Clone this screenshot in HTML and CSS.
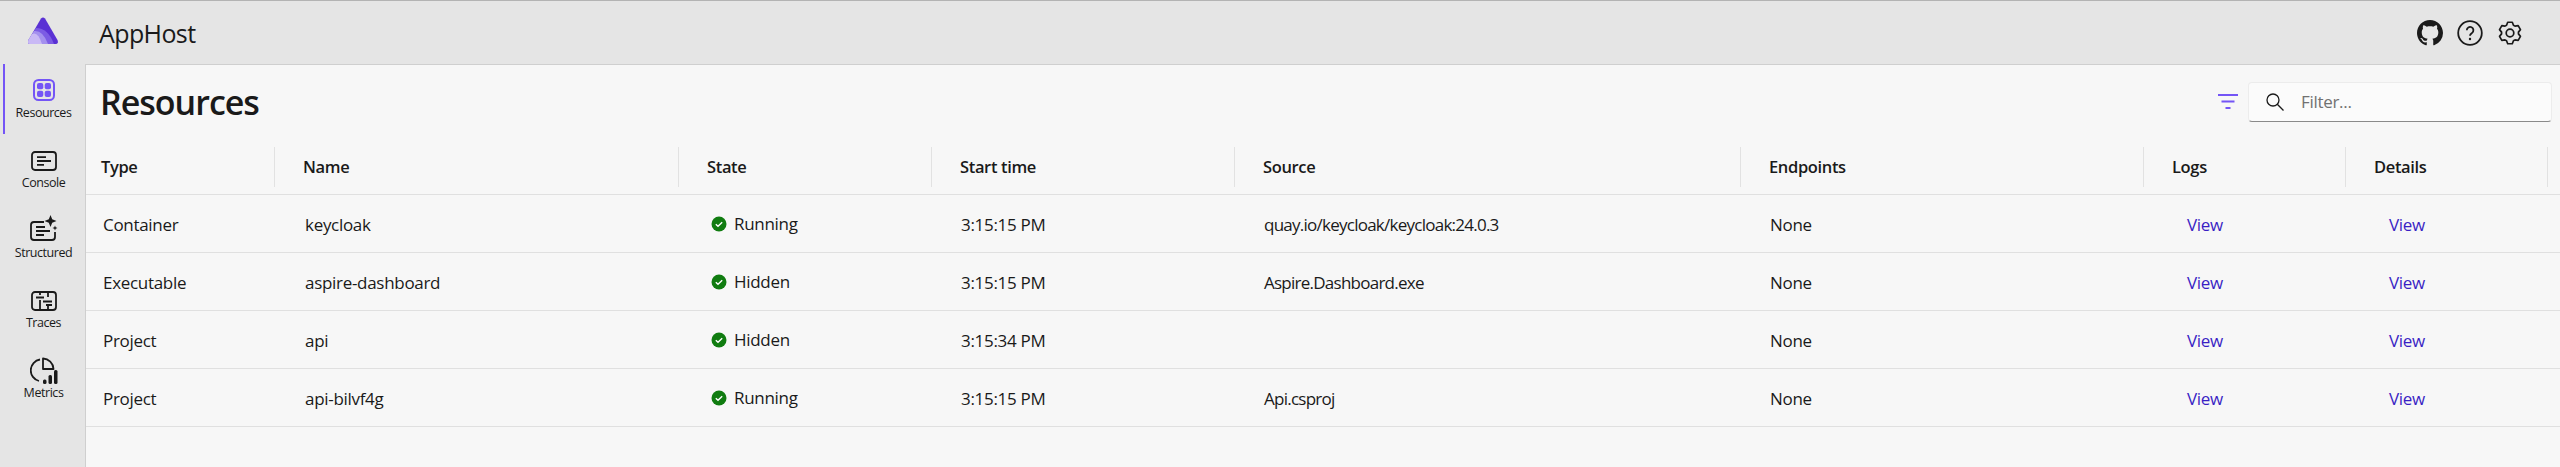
FILE: index.html
```html
<!DOCTYPE html>
<html lang="en">
<head>
<meta charset="utf-8">
<title>Resources</title>
<link rel="stylesheet" href="styles.css">
</head>
<body>
<div class="app">
  <header class="topbar">
    <div class="logo-cell">
      <svg viewBox="0 0 30 27" width="30" height="27">
        <path d="M13 1.500Q15 -.5 17 1.500L29.500 23Q31 27 27 27L3 27Q-1 27 .5 23Z" fill="#5a31d4"/>
        <path d="M3 27Q-1 27 .5 23L8 11Q20 11 26 27Z" fill="#7c5ce4"/>
        <path d="M3 27Q-1 27 .5 23L6 14Q15 13 20 27Z" fill="#a490ee"/>
        <path d="M3 27Q-1 27 .5 23L4 17Q10 14 14 27Z" fill="#c9b9f5"/>
      </svg>
    </div>
    <div class="app-title">AppHost</div>
    <div class="top-icons">
      <svg viewBox="0 0 16 16" width="26" height="26"><path fill="#1a1a1a" d="M8 0C3.580 0 0 3.580 0 8c0 3.540 2.290 6.530 5.470 7.590.4.070.55-.17.55-.38 0-.19-.01-.82-.01-1.490-2.010.37-2.530-.49-2.690-.94-.09-.23-.48-.94-.82-1.130-.28-.15-.68-.52-.01-.53.63-.01 1.080.58 1.230.82.72 1.210 1.870.87 2.330.66.070-.52.28-.87.51-1.070-1.780-.2-3.640-.89-3.640-3.950 0-.87.31-1.590.82-2.150-.08-.2-.36-1.020.08-2.120 0 0 .67-.21 2.200.82.64-.18 1.320-.27 2-.27s1.360.09 2 .27c1.530-1.040 2.200-.82 2.200-.82.44 1.100.16 1.920.08 2.120.51.56.82 1.270.82 2.150 0 3.070-1.870 3.750-3.650 3.950.29.25.54.73.54 1.480 0 1.070-.01 1.930-.01 2.200 0 .21.150.46.55.38A8.010 8.010 0 0 0 16 8c0-4.420-3.580-8-8-8z"/></svg>
      <svg viewBox="0 0 26 26" width="26" height="26"><circle cx="13" cy="13" r="11.800" fill="none" stroke="#1a1a1a" stroke-width="1.800"/><path d="M9.800 10.300a3.300 3.300 0 1 1 5.300 2.600c-1.200.9-2.100 1.300-2.100 2.900" fill="none" stroke="#1a1a1a" stroke-width="1.800"/><circle cx="13" cy="19" r="1.200" fill="#1a1a1a"/></svg>
      <svg class="gear" viewBox="0 0 24 24" width="24" height="24"><path d="M15.460 4.230L14.290 1.240H9.710L8.540 4.230L7 5.120L3.830 4.640L1.540 8.600L3.550 11.110V12.890L1.540 15.400L3.830 19.360L7 18.880L8.540 19.770L9.710 22.760H14.290L15.460 19.770L17 18.880L20.170 19.360L22.460 15.400L20.450 12.890V11.110L22.460 8.600L20.170 4.640L17 5.120Z" fill="none" stroke="#1a1a1a" stroke-width="1.700" stroke-linejoin="round"/><circle cx="12" cy="12" r="3.800" fill="none" stroke="#1a1a1a" stroke-width="1.700"/></svg>
    </div>
  </header>
  <div class="body">
    <nav class="nav">
      <a class="nav-item active">
        <span class="nav-icon"><svg viewBox="0 0 22 22" width="22" height="22"><rect x="1" y="1" width="20" height="20" rx="4.500" fill="none" stroke="#7455f6" stroke-width="2"/><rect x="4" y="4" width="6.300" height="6.300" rx="2" fill="#7455f6"/><rect x="11.700" y="4" width="6.300" height="6.300" rx="2" fill="#7455f6"/><rect x="4" y="11.700" width="6.300" height="6.300" rx="2" fill="#7455f6"/><rect x="11.700" y="11.700" width="6.300" height="6.300" rx="2" fill="#7455f6"/></svg></span>
        <span>Resources</span>
      </a>
      <a class="nav-item">
        <span class="nav-icon"><svg viewBox="0 0 26 20" width="26" height="20"><rect x="1" y="1" width="24" height="18" rx="3" fill="none" stroke="#1a1a1a" stroke-width="1.800"/><path d="M6 6.200h9M6 10h14M6 13.800h7" stroke="#1a1a1a" stroke-width="1.800"/></svg></span>
        <span>Console</span>
      </a>
      <a class="nav-item">
        <span class="nav-icon"><svg viewBox="0 0 28 26" width="28" height="26"><path d="M14 7H4a3 3 0 0 0-3 3v12a3 3 0 0 0 3 3h18a3 3 0 0 0 3-3v-5" fill="none" stroke="#1a1a1a" stroke-width="1.800"/><path d="M6 12h9M6 16h14M6 20h8" stroke="#1a1a1a" stroke-width="1.800"/><path d="M20.500 0l1.700 4.300L26.500 6l-4.300 1.700L20.500 12l-1.700-4.300L14.500 6l4.300-1.700zM25 10.500l.7 1.800 1.800.7-1.800.7-.7 1.800-.7-1.800-1.800-.7 1.800-.7z" fill="#1a1a1a"/></svg></span>
        <span>Structured</span>
      </a>
      <a class="nav-item">
        <span class="nav-icon"><svg viewBox="0 0 26 20" width="26" height="20"><rect x="1" y="1" width="24" height="18" rx="3" fill="none" stroke="#1a1a1a" stroke-width="1.800"/><path d="M9 1v3M9 9v10M17 1v5M17 15v4M5 6.500h8M12 10.500h9M15 14h6" stroke="#1a1a1a" stroke-width="1.800" fill="none"/></svg></span>
        <span>Traces</span>
      </a>
      <a class="nav-item">
        <span class="nav-icon"><svg class="metrics" viewBox="0 0 28 27" width="28" height="27"><path d="M10 2.500A11 11 0 0 0 9 24" fill="none" stroke="#1a1a1a" stroke-width="1.800"/><path d="M13 1.500A11 11 0 0 1 23.500 12H13Z" fill="none" stroke="#1a1a1a" stroke-width="1.800" stroke-linejoin="round"/><rect x="13" y="22.500" width="3.500" height="4.500" rx="1.500" fill="#1a1a1a"/><rect x="18.500" y="18" width="3.500" height="9" rx="1.500" fill="#1a1a1a"/><rect x="24" y="13" width="3.500" height="14" rx="1.500" fill="#1a1a1a"/></svg></span>
        <span>Metrics</span>
      </a>
    </nav>
    <main class="main">
      <div class="title-row">
        <h1>Resources</h1>
        <div class="tools">
          <svg viewBox="0 0 20 15" width="20" height="15"><path d="M0 1h20M3.500 7.500h13M7.500 14h5" stroke="#7455f6" stroke-width="2"/></svg>
          <div class="filter">
            <svg viewBox="0 0 18 18" width="18" height="18"><circle cx="7" cy="7" r="6" fill="none" stroke="#1a1a1a" stroke-width="1.300"/><path d="M11.300 11.300L17.500 17.500" stroke="#1a1a1a" stroke-width="1.300"/></svg>
            <span>Filter...</span>
          </div>
        </div>
      </div>
      <table class="grid">
        <colgroup>
          <col class="c1"><col class="c2"><col class="c3"><col class="c4"><col class="c5"><col class="c6"><col class="c7"><col class="c8"><col>
        </colgroup>
        <thead>
          <tr>
            <th><span class="h">Type</span></th><th><span class="h">Name</span></th><th><span class="h">State</span></th><th><span class="h">Start time</span></th><th><span class="h">Source</span></th><th><span class="h">Endpoints</span></th><th><span class="h">Logs</span></th><th><span class="h">Details</span></th><th class="end"></th>
          </tr>
        </thead>
        <tbody>
          <tr><td>Container</td><td>keycloak</td><td class="st"><span class="state"><svg viewBox="0 0 16 16" width="16" height="16"><circle cx="8" cy="8" r="7.500" fill="#107c10"/><path d="M4.800 8.200l2.200 2.100 4.200-4.100" fill="none" stroke="#fff" stroke-width="1.400"/></svg>Running</span></td><td>3:15:15 PM</td><td class="src">quay.io/keycloak/keycloak:24.0.3</td><td>None</td><td><a class="link">View</a></td><td><a class="link">View</a></td><td></td></tr>
          <tr><td>Executable</td><td>aspire-dashboard</td><td class="st"><span class="state"><svg viewBox="0 0 16 16" width="16" height="16"><circle cx="8" cy="8" r="7.500" fill="#107c10"/><path d="M4.800 8.200l2.200 2.100 4.200-4.100" fill="none" stroke="#fff" stroke-width="1.400"/></svg>Hidden</span></td><td>3:15:15 PM</td><td class="src">Aspire.Dashboard.exe</td><td>None</td><td><a class="link">View</a></td><td><a class="link">View</a></td><td></td></tr>
          <tr><td>Project</td><td>api</td><td class="st"><span class="state"><svg viewBox="0 0 16 16" width="16" height="16"><circle cx="8" cy="8" r="7.500" fill="#107c10"/><path d="M4.800 8.200l2.200 2.100 4.200-4.100" fill="none" stroke="#fff" stroke-width="1.400"/></svg>Hidden</span></td><td>3:15:34 PM</td><td class="src"></td><td>None</td><td><a class="link">View</a></td><td><a class="link">View</a></td><td></td></tr>
          <tr><td>Project</td><td>api-bilvf4g</td><td class="st"><span class="state"><svg viewBox="0 0 16 16" width="16" height="16"><circle cx="8" cy="8" r="7.500" fill="#107c10"/><path d="M4.800 8.200l2.200 2.100 4.200-4.100" fill="none" stroke="#fff" stroke-width="1.400"/></svg>Running</span></td><td>3:15:15 PM</td><td class="src">Api.csproj</td><td>None</td><td><a class="link">View</a></td><td><a class="link">View</a></td><td></td></tr>
        </tbody>
      </table>
    </main>
  </div>
</div>
</body>
</html>
```
FILE: styles.css
```css
* { box-sizing: border-box; }
html, body { margin: 0; height: 100%; }
body { font-family: "Open Sans", "Noto Sans", sans-serif; color: #1a1a1a; background: #e5e5e5; }
.app { height: 467px; display: flex; flex-direction: column; border-top: 1px solid #b3b3b3; overflow: hidden; }
.topbar { height: 63px; display: flex; align-items: center; background: #e5e5e5; flex: none; }
.logo-cell { width: 85px; display: flex; justify-content: center; margin-top: -5px; }
.app-title { font-size: 25px; font-weight: 400; margin-left: 14px; margin-top: 1px; letter-spacing: -.6px; flex: 1; }
.top-icons { display: flex; align-items: center; gap: 14px; margin-right: 38px; }
.gear { margin-left: 1px; }
.body { flex: 1; display: flex; min-height: 0; }
.nav { width: 85px; flex: none; display: flex; flex-direction: column; padding-left: 3px; }
.nav-item { height: 70px; display: flex; flex-direction: column; align-items: center; padding: 7px 3px 0 0; font-size: 12.500px; line-height: 18px; letter-spacing: -.45px; border-left: 2px solid transparent; }
.nav-item.active { border-left-color: #7455f6; }
.nav-icon { height: 30px; margin-bottom: 3px; display: flex; align-items: flex-end; }
.metrics { margin-bottom: -3px; }
.main { flex: 1; background: #f7f7f7; border-top: 1px solid #cfcfcf; border-left: 1px solid #cfcfcf; min-width: 0; }
.title-row { height: 73px; display: flex; align-items: center; justify-content: space-between; padding-left: 14px; }
h1 { margin: 0; font-size: 34px; font-weight: 600; letter-spacing: -1px; }
.tools { display: flex; align-items: center; gap: 10px; margin-right: 8px; }
.filter { width: 304px; height: 40px; background: #fbfbfb; border: 1px solid #ececec; border-bottom: 1px solid #8a8a8a; border-radius: 4px; display: flex; align-items: center; gap: 17px; padding-left: 17px; color: #717171; font-size: 17px; letter-spacing: -.3px; }
.grid { width: 2474px; border-collapse: collapse; table-layout: fixed; }
.c1 { width: 189px; }
.c2 { width: 404px; }
.c3 { width: 253px; }
.c4 { width: 303px; }
.c5 { width: 506px; }
.c6 { width: 403px; }
.c7 { width: 202px; }
.c8 { width: 202px; }
th { height: 56px; padding: 0; text-align: left; font-size: 16.500px; font-weight: 600; letter-spacing: -.35px; border-bottom: 1px solid #e0e0e0; }
.h { display: flex; align-items: center; height: 40px; padding-left: 28px; border-right: 1px solid #e2e2e2; margin-top: 2px; }
th:first-child .h { padding-left: 15px; }
td { height: 58px; padding: 3px 0 0 29px; font-size: 17px; letter-spacing: -.3px; border-bottom: 1px solid #e0e0e0; }
td:first-child { padding-left: 17px; }
td:nth-child(2) { padding-left: 30px; }
td.st { padding-left: 32px; }
td.src { letter-spacing: -.75px; }
.state { display: inline-flex; align-items: center; gap: 7px; }
.state svg { flex: none; }
.link { color: #3a1fc4; display: block; padding-left: 14px; }
```
